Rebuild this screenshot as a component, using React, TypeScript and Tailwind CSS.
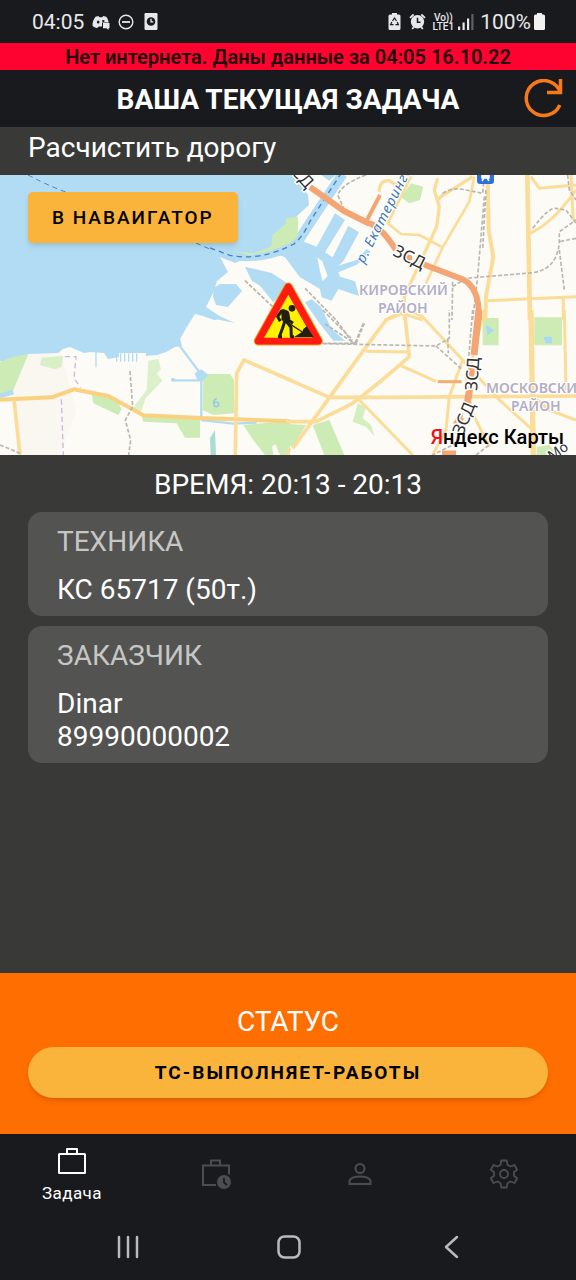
import type { ReactNode } from "react";

function StatusBar() {
  return (
    <div className="flex h-[43px] items-center justify-between pl-8 pr-[31px] text-[21px] leading-6 text-[#e8e8ea]">
      <div className="flex items-center gap-2">
        <span>04:05</span>
        <svg className="h-[18px] w-[18px]" viewBox="0 0 18 18" aria-hidden="true">
          <path
            d="M3.500 3.800 6.500 3l.8 1.200h3L11.200 3l3 .8c1.400 1.800 2.200 3.600 2.500 5.600H10v4.200H7L5 15C3.300 14.700 1.500 14 .5 12.800.3 9.400 1.500 6.400 3.500 3.800Z"
            fill="#e8e8ea"
          />
          <ellipse cx="6.200" cy="9" rx="1.300" ry="1.500" fill="#191a1e" />
          <ellipse cx="11.300" cy="8" rx="1.300" ry="1" fill="#191a1e" />
          <path d="M11 10h6.500v5.200h-1V17l-2-1.800H11Z" fill="#e8e8ea" />
        </svg>
        <svg className="h-4 w-4" viewBox="0 0 16 16" fill="none" stroke="#e8e8ea" strokeWidth="1.400" aria-hidden="true">
          <circle cx="8" cy="8" r="6.800" />
          <path d="M4 8h8" strokeWidth="1.800" />
        </svg>
        <svg className="ml-[2px] h-[17px] w-[14px]" viewBox="0 0 14 17" aria-hidden="true">
          <rect x="0.500" width="13" height="17" rx="1.200" fill="#e8e8ea" />
          <circle cx="7" cy="8.500" r="4.300" fill="#191a1e" />
          <path d="M7 5.800v3h2.300" stroke="#e8e8ea" strokeWidth="1.300" fill="none" />
        </svg>
      </div>
      <div className="flex items-center">
        <svg className="mr-2 h-[17px] w-[13px]" viewBox="0 0 13 17" aria-hidden="true">
          <path d="M4 0h5v1.500h2A1.500 1.500 0 0 1 12.500 3v12.500A1.500 1.500 0 0 1 11 17H2a1.500 1.500 0 0 1-1.500-1.500V3A1.500 1.500 0 0 1 2 1.500h2Z" fill="#e8e8ea" />
          <path d="m4.500 8 2-3 2 3M9.200 9l1.200 2.600H7.500M5.500 11.600H2.600L3.800 9" stroke="#191a1e" strokeWidth="1.200" fill="none" />
        </svg>
        <svg className="mr-[7px] h-[17px] w-[17px]" viewBox="0 0 17 17" aria-hidden="true">
          <circle cx="8.500" cy="8.800" r="6.700" fill="#e8e8ea" />
          <path d="M1 4.800 4.600 1.500M16 4.800l-3.600-3.300M3.200 16l1.600-1.900M13.800 16l-1.600-1.900" stroke="#e8e8ea" strokeWidth="1.800" />
          <path d="M8.500 4.800v4.500h3" stroke="#191a1e" strokeWidth="1.500" fill="none" />
        </svg>
        <span className="flex flex-col items-center text-[10px] font-medium leading-[9px]">
          <span>Vo))</span>
          <span>LTE1</span>
        </span>
        <svg className="ml-1 mr-[6px] h-[17px] w-4" viewBox="0 0 16 17" aria-hidden="true">
          <path d="M0 13.500h2.200V17H0ZM4.500 9.500h2.200V17H4.500ZM9 5.500h2.200V17H9Z" fill="#e8e8ea" />
          <path d="M13.300 1h2.200v16h-2.200Z" fill="#5f6064" />
        </svg>
        <span>100%</span>
        <svg className="ml-[3px] h-[17px] w-[11px]" viewBox="0 0 11 17" aria-hidden="true">
          <path d="M3 0h5v1.500h1.500A1.500 1.500 0 0 1 11 3v12.500A1.500 1.500 0 0 1 9.500 17h-8A1.500 1.500 0 0 1 0 15.500V3a1.500 1.500 0 0 1 1.500-1.500H3Z" fill="#f2f2f3" />
        </svg>
      </div>
    </div>
  );
}

function RoadworksSign() {
  return (
    <svg x="253" y="107" width="71" height="64" viewBox="0 0 213 192">
      <path d="M106 15 196 177H16Z" fill="#ff1a12" stroke="#e7a21c" strokeWidth="27" strokeLinejoin="round" />
      <path d="M106 15 196 177H16Z" fill="#ff1a12" stroke="#ff1a12" strokeWidth="21" strokeLinejoin="round" />
      <path d="M106 38 179 167H33Z" fill="#fff200" />
      <circle cx="117" cy="79" r="10" fill="#231f10" />
      <path
        d="M86 86 74 104l8 14M88 84l16 8 4 22M92 92l2 30-6 18-9 24h8M98 116l16 20 1 28h8M102 112l18 12"
        fill="none"
        stroke="#231f10"
        strokeWidth="9"
        strokeLinejoin="round"
      />
      <path d="m84 82 20 4 6 24-14 14-10-12Z" fill="#231f10" />
      <path d="m86 110 62 40" stroke="#231f10" strokeWidth="4" />
      <path d="M122 166h60l-21-33-10 8-3 8Z" fill="#231f10" />
    </svg>
  );
}

function CityMap() {
  return (
    <svg
      className="block h-[280px] w-full"
      viewBox="0 0 576 280"
      preserveAspectRatio="xMidYMid slice"
      role="img"
      aria-label="Карта"
    >
      <rect width="576" height="280" fill="#fcfbf6" />
      <path d="M28 178 60 174 76 236 60 280H22L14 225H0v-25Z" fill="#faf6f0" />

      {/* Gulf */}
      <path
        d="M0 0H293L301 10 308 20 309 30 297 41 284 53 273 60 272 74 235 88 220 82 228 97 217 106 214 116 206 132 224 144 214 145 203 141 195 139 188 150 180 164 182 171 175 172 166 177 157 180 146 181V178H119V182L108 184 104 178 90 177 84 178 70 172 63 174 58 178 28 179 10 186H0Z"
        fill="#b1dcf3"
      />
      <path d="M214 113 220 109 236 109 242 116 228 132 216 130 213 122Z" fill="#b1dcf3" />
      <path d="M206 135 235 148 220 145Z" fill="#b1dcf3" />

      {/* Harbour, channel and basins */}
      <g transform="translate(210 -1) scale(0.3333)">
        <path d="M60 240Q110 255 180 238T262 206Q310 130 398 0" fill="none" stroke="#b1dcf3" strokeWidth="30" />
        <path
          d="M200 240 275 200 320 218 375 118 405 138 345 235 368 250 415 155 447 175 400 262 385 275 440 258 470 225 482 233 440 272 385 295 390 308 435 322 447 366 385 345 365 380 335 370 330 345 270 310 225 250Z"
          fill="#b1dcf3"
        />
        <path d="M322 250 337 262 353 306 338 322 330 292Z" fill="#fcfbf6" />
        <path d="M105 278 185 297 235 330 225 350 190 385 150 335 125 320Z" fill="#b1dcf3" />
        <path d="M285 385 305 376 332 398 365 465 405 500 370 500 330 450Z" fill="#b1dcf3" />
        <path d="M330 0 358 20 380 0Z" fill="#b1dcf3" />
        <path d="M60 230 130 238 183 218 190 182 245 132 265 140 262 190 240 208 180 232 120 244Z" fill="#cdebb4" />
        <path d="M232 168 254 178 240 192Z" fill="#b1dcf3" />
        <path d="M0 222 60 244Q150 262 252 210 280 186 300 142L392 0" fill="none" stroke="#4a7fc4" strokeWidth="4" strokeDasharray="16 12" />
        <path d="M105 320 190 400M285 343 380 440 430 508M345 450 440 512M335 508H435L460 448" fill="none" stroke="#b9b5ae" strokeWidth="5" strokeDasharray="12 5" />
      </g>
      <path d="M28 0Q55 14 72 19M196 68 212 75" fill="none" stroke="#4a7fc4" strokeWidth="1" strokeDasharray="5 4" />

      {/* Parks */}
      <g transform="translate(0 135) scale(0.3333)">
        <path d="M0 155 40 140 85 133 40 240 0 262Z" fill="#cdebb4" />
        <path d="M125 143 190 138 185 170 165 178 120 165Z" fill="#d9efc6" />
        <path d="M445 152 475 147 483 178 470 190 487 212 437 265 422 308 398 295 440 240Z" fill="#dcf0cc" />
        <path d="M275 250 350 268 365 298 355 315 280 280Z" fill="#cdebb4" />
        <path d="M425 318 600 325V383H555L530 340 430 335Z" fill="#cdebb4" />
        <path d="M610 192H690L702 210V310L640 315 608 300Z" fill="#cdebb4" />
        <path d="M730 345 870 333V435H795L760 390Z" fill="#cdebb4" />
        <path d="m820 435-4-25 10-8 14 33Z" fill="#fcfbf6" />
        <path d="M632 435 630 385 645 360 648 435Z" fill="#a9dcd3" />
        <path
          d="M538 106 604 194M518 211H600M604 194V330M604 330 700 341 770 338"
          fill="none"
          stroke="#b1dcf3"
          strokeWidth="7"
        />
        <path d="M584 190 604 178 625 194 606 215 592 210Z" fill="#b1dcf3" />
        <circle cx="519" cy="209" r="6" fill="#b1dcf3" />
        <path d="M288 120V172M350 130V155M362 130V155M374 130V155M386 130V155M398 130V155M410 130V155" stroke="#b1dcf3" strokeWidth="4" />
        <path d="M0 258 40 246" stroke="#b1dcf3" strokeWidth="14" />
        <path d="M650 266Q640 268 641 282" fill="none" stroke="#9bc9e8" strokeWidth="5" />
        <circle cx="649" cy="283" r="7" fill="none" stroke="#9bc9e8" strokeWidth="5" />
      </g>
      <g transform="translate(286 135) scale(0.3333)">
        <path d="M590 24H638V106H590ZM745 22H828V106H745Z" fill="#cdebb4" />
        <path d="M600 45 625 60 605 76ZM772 80H798V100H780Z" fill="#a9d9f2" />
        <path d="M0 342 60 345 20 410 0 400ZM80 345 130 330 175 435H115Z" fill="#cdebb4" />
        <path d="M215 280 240 290 230 325 255 345 265 378 240 350 200 335Z" fill="#d3eebf" />
        <path d="M752 410 790 405 820 435H752Z" fill="#cdebb4" />
      </g>
      <g transform="translate(286 -5) scale(0.3333)">
        <path d="M0 145 35 140 35 190 0 222Z" fill="#cdebb4" />
        <path d="M375 40 412 50 402 90 370 100 345 82Z" fill="#cdebb4" />
      </g>

      {/* Streets */}
      <g fill="none" stroke="#fbdc98" strokeLinejoin="round">
        <g transform="translate(0 135) scale(0.3333)">
          <path d="M0 269 155 262 222 238 325 258 430 316 620 325 870 334" stroke="#fbd07e" strokeWidth="12" />
          <path d="M42 270 60 435" strokeWidth="11" />
          <path d="M706 435 710 190 732 150 870 210" strokeWidth="11" />
          <path d="M860 435 870 415" strokeWidth="9" />
        </g>
        <g transform="translate(286 -5) scale(0.3333)">
          <path d="M375 20 305 160 345 192 400 195 470 232 550 95 565 20" strokeWidth="8" />
          <path d="M455 25 445 60 460 110 452 170 415 250 355 380V450M280 65Q280 30 310 32L340 50M465 80 560 20M455 90 475 70" strokeWidth="10" />
          <path d="M470 232 420 340" strokeWidth="8" />
          <path d="M605 30 608 180 622 260 600 380 598 450" strokeWidth="12" />
          <path d="M724 15 732 450" strokeWidth="14" />
          <path d="M732 190Q800 160 870 60M855 15 862 150M735 20 760 55 870 45M605 392 870 380M832 385V450M300 450 350 430 410 450" strokeWidth="9" />
        </g>
        <g transform="translate(286 135) scale(0.3333)">
          <path d="M0 205 130 262 300 262 870 258" strokeWidth="11" />
          <path d="M20 415 230 125 300 30 350 5" strokeWidth="11" />
          <path d="M0 335 90 335 200 280Q280 220 370 140L355 0" strokeWidth="11" />
          <path d="M240 124 365 126M340 165 450 214M215 265 380 435M365 0 410 20 530 150 490 260 480 360 440 435M530 150 640 270 735 355" strokeWidth="9" />
          <path d="M735 0 742 435" strokeWidth="16" />
          <path d="M595 0 540 220 560 310 610 410M835 0 840 240" strokeWidth="9" />
          <path d="M742 260 790 300 870 330" strokeWidth="9" />
          <path d="M455 215H527" stroke="#f5ad70" strokeWidth="9" />
        </g>
      </g>

      {/* Railways and district borders */}
      <g fill="none" stroke="#b9b7b2" strokeDasharray="12 6" strokeWidth="5">
        <g transform="translate(286 -5) scale(0.3333)">
          <path d="M240 15Q170 40 155 75L180 130M470 70Q500 50 540 60L590 70 595 20M600 60 590 240M595 80 575 320 560 450M500 350 540 325 740 308Q810 300 820 220V185L870 150M740 175Q790 110 810 115L840 120 870 160M845 15 850 60 870 90M820 240 835 360M870 205 820 215M500 335 498 450" />
        </g>
        <g transform="translate(286 135) scale(0.3333)">
          <path d="M110 0 200 90M112 101 450 108 490 85V0M450 108 530 180M485 85 487 130M210 100 235 40M560 0 545 180M530 310 510 400 440 435M570 435 610 405" />
        </g>
        <g transform="translate(0 135) scale(0.3333)">
          <path d="M390 183 398 290 376 330 392 390 386 435M0 405 65 432" />
          <path d="M195 140H228L222 205 242 232M184 268 190 435" stroke="#cdb6e0" strokeWidth="4" strokeDasharray="16 10" />
        </g>
      </g>

      {/* Western high-speed diameter */}
      <g fill="none" stroke="#f4a574" strokeLinejoin="round">
        <path d="M310 12 344 36 368 48Q380 50 396 75M420 88 462 104Q480 112 479 145" strokeWidth="6" />
        <path d="M366 47 380 20" strokeWidth="4" />
        <path d="M479 135 474 180M472 192 470 202M470 212 467 230M461 242 456 250M442 279H456" strokeWidth="7" />
        <circle cx="409" cy="83" r="3" fill="#f4a574" />
      </g>

      <g fontFamily="'Noto Sans', sans-serif">
        <g fill="#303035" stroke="#ffffff" strokeWidth="3" paintOrder="stroke" fontSize="17">
          <text transform="translate(392 80) rotate(26)">ЗСД</text>
          <text transform="translate(284 -10) rotate(48)">ЗСД</text>
          <text transform="translate(477 216) rotate(-86)">ЗСД</text>
          <text transform="translate(463 261) rotate(-68)">ЗСД</text>
          <text transform="translate(552 286) rotate(-35)" fontSize="14">Мо</text>
        </g>
        <text
          transform="translate(364 89) rotate(-63)"
          fontSize="14"
          fontStyle="italic"
          letterSpacing="1"
          fill="#3e78b5"
          stroke="#ffffff"
          strokeWidth="2"
          paintOrder="stroke"
        >
          р. Екатерингофка
        </text>
        <g fill="#b2aec5" stroke="#ffffff" strokeWidth="2" paintOrder="stroke" fontSize="14" fontWeight="600">
          <text x="359" y="120">КИРОВСКИЙ</text>
          <text x="378" y="138">РАЙОН</text>
          <text x="486" y="218">МОСКОВСКИЙ</text>
          <text x="511" y="236">РАЙОН</text>
        </g>
      </g>

      <rect x="477" y="-8" width="17" height="17" rx="3" fill="#2f6fdc" />
      <path d="M482-4h7v7h-7ZM482 6l2-3M489 6l-2-3" fill="#ffffff" stroke="#ffffff" strokeWidth="1.500" />
      <RoadworksSign />
    </svg>
  );
}

function InfoCard({ title, children }: { title: string; children: ReactNode }) {
  return (
    <section className="rounded-[14px] bg-[#535351] px-[29px] pb-[10px] pt-[13px] text-[28px] leading-[33px]">
      <h2 className="mb-[15px] text-[#c6c6c5]">{title}</h2>
      {children}
    </section>
  );
}

function BottomNav() {
  return (
    <nav className="grid h-[79px] grid-cols-4 text-[#4c4d4f]">
      <a href="#task" className="flex flex-col items-center justify-center gap-2 pt-[2px] text-white">
        <svg className="h-7 w-7" viewBox="0 0 28 28" fill="none" stroke="currentColor" strokeWidth="2" strokeLinejoin="round" aria-hidden="true">
          <rect x="1" y="7" width="26" height="19" rx="0.500" />
          <path d="M9 7V2h10v5" />
        </svg>
        <span className="text-[17px] leading-5 tracking-wide">Задача</span>
      </a>
      <a href="#history" aria-label="История" className="flex items-center justify-center">
        <svg className="h-[30px] w-[30px]" viewBox="0 0 30 30" fill="none" stroke="currentColor" strokeWidth="2" aria-hidden="true">
          <path d="M15 26H2V6.500h26v9M10 6.500V1.500h9v5" />
          <circle cx="23" cy="23" r="7" fill="currentColor" stroke="none" />
          <path d="M23 19v4.500l3 2.500" stroke="#191a1e" strokeWidth="1.800" />
        </svg>
      </a>
      <a href="#profile" aria-label="Профиль" className="flex items-center justify-center">
        <svg className="h-6 w-6" viewBox="0 0 24 24" fill="none" stroke="currentColor" strokeWidth="2" aria-hidden="true">
          <circle cx="12" cy="6.500" r="4.500" />
          <path d="M1.500 22v-2.500C1.500 16 7 14.500 12 14.500s10.500 1.500 10.500 5V22Z" />
        </svg>
      </a>
      <a href="#settings" aria-label="Настройки" className="flex items-center justify-center">
        <svg className="h-[30px] w-[30px]" viewBox="0 0 30 30" fill="none" stroke="currentColor" strokeWidth="1.800" strokeLinejoin="round" aria-hidden="true">
          <path d="M12.300 1.500h5.400l.7 4.200 3.100 1.800 4-1.500 2.700 4.700-3.300 2.600v3.400l3.300 2.600-2.700 4.700-4-1.500-3.100 1.800-.7 4.200h-5.400l-.7-4.200-3.100-1.800-4 1.500-2.700-4.700 3.300-2.600v-3.400l-3.300-2.600L4.500 6l4 1.500 3.100-1.800Z" />
          <circle cx="15" cy="15" r="4" />
        </svg>
      </a>
    </nav>
  );
}

function SystemNav() {
  return (
    <div className="grid h-[67px] grid-cols-3 items-center justify-items-center pl-12 pr-[46px] text-[#b9babc]">
      <button type="button" aria-label="Недавние">
        <svg className="h-6 w-6" viewBox="0 0 24 24" stroke="currentColor" strokeWidth="2.500" strokeLinecap="round" aria-hidden="true">
          <path d="M3 2v20M12 2v20M21 2v20" />
        </svg>
      </button>
      <button type="button" aria-label="Домой">
        <svg className="h-6 w-6" viewBox="0 0 24 24" fill="none" stroke="currentColor" strokeWidth="2.500" aria-hidden="true">
          <rect x="1.500" y="1.500" width="21" height="21" rx="6" />
        </svg>
      </button>
      <button type="button" aria-label="Назад">
        <svg className="h-6 w-6" viewBox="0 0 24 24" fill="none" stroke="currentColor" strokeWidth="2.500" strokeLinecap="round" strokeLinejoin="round" aria-hidden="true">
          <path d="M19 2 8 12l11 10" />
        </svg>
      </button>
    </div>
  );
}

export default function App() {
  return (
    <div className="flex min-h-screen flex-col bg-[#191a1e] font-['Roboto',sans-serif] text-white">
      <StatusBar />
      <p className="bg-[#ff0330] pb-px pt-[2px] text-center text-[20px] font-semibold leading-6 text-[#25060c]">
        Нет интернета. Даны данные за 04:05 16.10.22
      </p>
      <header className="grid h-[57px] grid-cols-[1fr_auto_1fr] items-center pr-3">
        <h1 className="col-start-2 pl-3 pt-[2px] text-[28px] font-bold leading-8">ВАША ТЕКУЩАЯ ЗАДАЧА</h1>
        <button type="button" aria-label="Обновить" className="justify-self-end">
          <svg className="block h-10 w-10" viewBox="0 0 40 40" fill="none" stroke="#f77a18" strokeWidth="3.500" aria-hidden="true">
            <path d="M35.800 26A17.500 17.500 0 1 1 36.500 14" />
            <path d="M36.500 0v13.500H23" />
          </svg>
        </button>
      </header>

      <main className="flex grow flex-col bg-[#393a37]">
        <p className="px-7 pb-[11px] pt-1 text-[28px] leading-[33px]">Расчистить дорогу</p>

        <div className="relative overflow-hidden">
          <CityMap />
          <button
            type="button"
            className="absolute left-7 top-[17px] h-[51px] rounded-[5px] bg-[#fbb43b] px-6 text-[19px] font-medium leading-6 tracking-[2px] text-black shadow-md"
          >
            В НАВАИГАТОР
          </button>
          <a href="#maps" className="absolute bottom-1 right-3 text-[20px] font-medium leading-7 text-black">
            <span className="text-[#f2101a]">Я</span>ндекс Карты
          </a>
        </div>

        <p className="pb-[11px] pt-[13px] text-center text-[28px] leading-[33px]">ВРЕМЯ: 20:13 - 20:13</p>

        <div className="flex grow flex-col gap-[10px] px-7 pb-8">
          <InfoCard title="ТЕХНИКА">
            <p>КС 65717 (50т.)</p>
          </InfoCard>
          <InfoCard title="ЗАКАЗЧИК">
            <p>Dinar</p>
            <p>89990000002</p>
          </InfoCard>
        </div>

        <section className="flex flex-col bg-[#ff6e00] px-7 pb-9 pt-8 text-center">
          <h2 className="mb-[9px] text-[28px] leading-[33px]">СТАТУС</h2>
          <button
            type="button"
            className="h-[51px] rounded-full bg-[#fbb43b] text-[19px] font-bold leading-6 tracking-[2px] text-black shadow-md"
          >
            ТС-ВЫПОЛНЯЕТ-РАБОТЫ
          </button>
        </section>
      </main>

      <BottomNav />
      <SystemNav />
    </div>
  );
}
